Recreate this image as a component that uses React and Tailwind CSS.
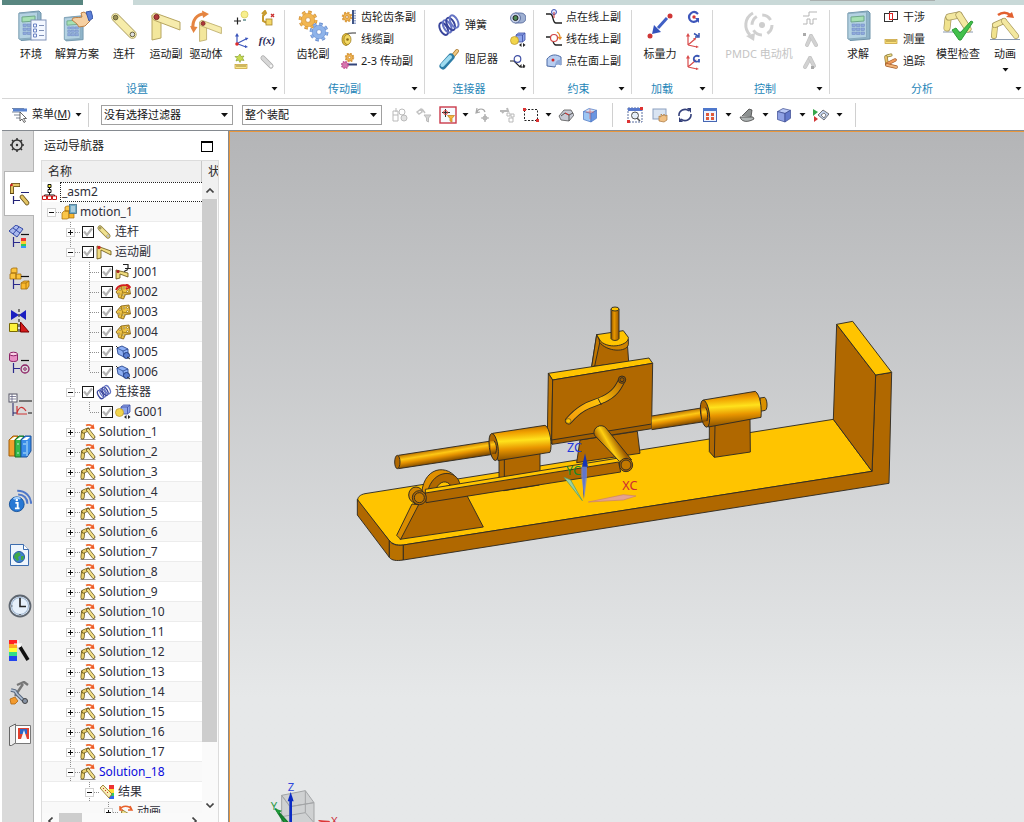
import { useState } from 'react'
import clsx from 'clsx'

const Svg = ({ s = 16, box = 16, children, className }) => (
  <svg width={s} height={s} viewBox={`0 0 ${box} ${box}`} fill="none" className={clsx('shrink-0', className)} aria-hidden="true">
    {children}
  </svg>
)

const Caret = ({ className }) => (
  <svg width="7" height="4" viewBox="0 0 7 4" className={clsx('shrink-0', className)} aria-hidden="true">
    <path d="M0.5 0h6L3.5 3.6z" fill="#111" />
  </svg>
)

// a linkage bar with round ends, shared by most of the motion icons
const Bar = ({ x1, y1, x2, y2, w = 6, fill = '#f0e290', edge = '#8c7b35' }) => (
  <g strokeLinecap="round">
    <path d={`M${x1} ${y1}L${x2} ${y2}`} stroke={edge} strokeWidth={w} />
    <path d={`M${x1} ${y1}L${x2} ${y2}`} stroke={fill} strokeWidth={w - 1.4} />
  </g>
)

const Gear = ({ cx, cy, r, fill, edge, hole = '#fff' }) => (
  <g>
    <circle cx={cx} cy={cy} r={r * 0.95} stroke={edge} strokeWidth={r * 0.45} strokeDasharray={`${r * 0.4} ${r * 0.346}`} />
    <circle cx={cx} cy={cy} r={r * 0.92} stroke={fill} strokeWidth={r * 0.36} strokeDasharray={`${r * 0.36} ${r * 0.363}`} />
    <circle cx={cx} cy={cy} r={r * 0.85} fill={fill} stroke={edge} strokeWidth="0.5" />
    <circle cx={cx} cy={cy} r={r * 0.3} fill={hole} stroke={edge} strokeWidth="0.7" />
  </g>
)

const Calculator = () => (
  <g>
    <path d="M4 3l20-2 2 2v26l-20 1.500-2-2z" fill="#8fb4c9" stroke="#6f93a9" />
    <path d="M4 3.500L22.500 2v25.500L4 29z" fill="#b4d2e2" stroke="#88aabd" />
    <path d="M7 7l13-1v5L7 12z" fill="#a6e0b2" stroke="#6fa889" />
    {[14, 18, 22].map((y) =>
      [8, 12.500, 17].map((x) => <rect key={`${x}-${y}`} x={x} y={y} width="3.500" height="2.600" fill="#8fa9dc" stroke="#6c88c0" strokeWidth="0.500" />)
    )}
  </g>
)

const Cube = ({ top = '#b9c8f4', left = '#8fa1e4', right = '#6379cb', edge = '#39498f' }) => (
  <g stroke={edge} strokeWidth="0.700" strokeLinejoin="round">
    <path d="M1.500 4.500L7 1.500l7.500 1.800L9 6.500z" fill={top} />
    <path d="M1.500 4.500L9 6.500V15l-7.500-2.500z" fill={left} />
    <path d="M9 6.500l5.500-3.200v8L9 15z" fill={right} />
  </g>
)

const SolutionIcon = () => (
  <Svg>
    <path d="M.5 15.500h15" stroke="#777" strokeWidth=".8" />
    <Bar x1={2.500} y1={13.500} x2={3} y2={8} w={4} fill="#e8cf70" edge="#5c4a12" />
    <Bar x1={3.500} y1={7.500} x2={8} y2={5.500} w={4} fill="#e8cf70" edge="#5c4a12" />
    <Bar x1={8} y1={6} x2={13.500} y2={13} w={3.600} fill="#f3e08a" edge="#5c4a12" />
    <path d="M6 1.500c2-1 4-1 6 .5" stroke="#f0703a" strokeWidth="1.800" />
    <path d="M14.500 5l-5-.5 4-4.500z" fill="#ee5a24" />
  </Svg>
)

const LinkIcon = ({ s = 16 }) => (
  <Svg s={s}>
    <Bar x1={4} y1={4} x2={12} y2={12} w={5} />
    <circle cx="4" cy="4" r="1.200" fill="#c9b75e" stroke="#665" strokeWidth=".5" />
    <circle cx="12" cy="12" r="1.200" fill="#fff" stroke="#665" strokeWidth=".5" />
  </Svg>
)

const JointBars = () => (
  <g strokeLinejoin="round">
    <path d="M2 5v25l9-2V8z" fill="#f3e79c" stroke="#b7a661" />
    <path d="M5 3C1 4.500 1 9 5 10.500L30 20v-8z" fill="#f6ecad" stroke="#b7a661" />
    <circle cx="6.500" cy="7" r="2.600" fill="#b03a3a" stroke="#7b2525" />
  </g>
)

const Spring = () => (
  <g strokeWidth="1.300">
    {[0, 1, 2, 3].map((i) => (
      <ellipse key={i} cx={4.500 + i * 2.300} cy={10.500 - i * 1.600} rx="2.400" ry="4.500" transform={`rotate(-28 ${4.500 + i * 2.300} ${10.500 - i * 1.600})`} stroke={i % 2 ? '#6574c4' : '#39459b'} />
    ))}
  </g>
)

const Contact = () => (
  <g>
    <path d="M6 3l2.500-2H15v7l-2.500 2H6z" fill="#8fa5ea" stroke="#3c4ea4" strokeWidth=".8" />
    <path d="M6 3h6.500v7M12.500 3L15 1" stroke="#3c4ea4" strokeWidth=".8" />
    <circle cx="4.500" cy="8.500" r="4" fill="#f2d54b" stroke="#b8952a" strokeWidth=".7" />
    <path d="M11.500 11v4l-2.500-2zM13 11v4l2.500-2z" fill="#222" />
  </g>
)

const Bracket = ({ driven }) => (
  <Svg>
    <path d="M1 8l5-6 8-1 1.500 9-5 .5-2 4.500-5-1.500-.5-3z" fill="#f0c544" stroke="#7d5b0c" strokeWidth=".8" />
    <path d="M6 2l1.500 6 8 1.500M7.500 8L6 14" stroke="#8a640f" strokeWidth=".7" />
    {['5,5.500', '9,4', '12.500,3.500', '12.500,7.500', '4,10', '8.500,11'].map((p) => (
      <circle key={p} cx={p.split(',')[0]} cy={p.split(',')[1]} r="1" fill="#fff6cf" stroke="#6d4f0b" strokeWidth=".5" />
    ))}
    {driven && <path d="M1 6c2-5 8-6 13-3.500M11 0l4 3-4 2" stroke="#d31f1f" strokeWidth="1.800" />}
  </Svg>
)

const BlueBlock = () => (
  <Svg>
    <path d="M2 4l5-2 6 3v6l-4 2-6-3z" fill="#8fb0f4" stroke="#27468f" strokeWidth=".9" />
    <path d="M2 4l6 3 5-2M8 7l1 6" stroke="#27468f" strokeWidth=".8" />
    <circle cx="11.500" cy="11.500" r="3" fill="#5b7fd2" stroke="#1f3a7d" />
    <path d="M1 2l2 2M12 13l3 2" stroke="#333" />
  </Svg>
)

const Axes = ({ arrow }) => (
  <Svg>
    <path d="M3 13V3M3 13l9 2M3 13l7-6" stroke="#d94b4b" strokeWidth="1.200" />
    <path d="M1 4.500L3 1l2 3.500zM11 13.500l3 1.500-3 1zM8 6.500l3.500-1-1.500 3z" fill="#d94b4b" />
    {arrow === 'line' ? (
      <path d="M9 1.500l4 2.500m1-3V5h-4" stroke="#3956b4" strokeWidth="1.500" />
    ) : (
      <path d="M14.500 2.500C11 .5 8 3 9 6c1 2 3 2 5 1M14 5v3.500" stroke="#3956b4" strokeWidth="1.800" />
    )}
  </Svg>
)

const CornerTree = ({ children }) => (
  <Svg s={24} box={24}>
    {children}
    <path d="M13 9.500h8" stroke="#111" strokeWidth="1.200" />
    <path d="M5.500 12v10M6 17.500h6" stroke="#2a2a8c" strokeWidth="1.200" />
  </Svg>
)

const Small = ({ label, children }) => (
  <button type="button" aria-label={label} className="flex h-[22px] w-[26px] items-center justify-center">
    {children}
  </button>
)

const Big = ({ label, icon, width, muted, menu }) => (
  <button type="button" className={clsx('flex flex-col items-center whitespace-nowrap pt-1', width, muted ? 'text-[#c4c4c4]' : 'text-[#1c1c1c]')}>
    <span className="flex h-8 items-center justify-center">{icon}</span>
    <span className="mt-1 h-4 leading-4">{label}</span>
    {menu && <Caret className="mt-1.5" />}
  </button>
)

const Row = ({ label, icon, tall }) => (
  <button type="button" className={clsx('flex items-center gap-1 whitespace-nowrap text-[#1c1c1c]', tall ? 'h-[34px]' : 'h-[22px]')}>
    {icon}
    <span className="leading-4">{label}</span>
  </button>
)

const Group = ({ title, children, last, className }) => (
  <section className={clsx('mt-[5px] flex h-[84px] shrink-0 flex-col', !last && 'border-r border-[#d6d6d6]', className)}>
    <div className="-mt-1 flex h-[75px] shrink-0 items-start">{children}</div>
    <div className="flex h-4 shrink-0 items-center">
      <h2 className="flex-1 text-center leading-4 text-[#1f86b8]">{title}</h2>
      <button type="button" aria-label={`${title}选项`} className="flex w-5 justify-center">
        <Caret />
      </button>
    </div>
  </section>
)

function Ribbon() {
  return (
    <div className="flex h-[94px] shrink-0 overflow-hidden border-b border-[#d6d6d6] text-[11px]">
      <Group title="设置" className="pl-2">
        <Big width="w-[42px]" label="环境" icon={
          <Svg s={32} box={32}>
            <Calculator />
            <rect x="16" y="10" width="15" height="20" fill="#f3f7ff" stroke="#8092b8" />
            <path d="M18.500 14h3v3h-3zM18.500 19h3v3h-3zM18.500 24h3v3h-3z" stroke="#6b82c2" />
            <path d="M24 15.500h5M24 20.500h5M24 25.500h5" stroke="#7f8fb5" />
          </Svg>
        } />
        <Big width="w-[50px]" label="解算方案" icon={
          <Svg s={32} box={32}>
            <g transform="translate(0 5) scale(.85)"><Calculator /></g>
            <path d="M12 8c4-1 7 0 9-1l-1-4 3-1 4 3 2 6-5 5-6 1-2-3-5-4z" fill="#f6d0a2" stroke="#bd8046" />
            <path d="M25 2l5-1 2 7-4 3z" fill="#5b7fd8" stroke="#3c59a8" />
          </Svg>
        } />
        <Big width="w-11" label="连杆" icon={
          <Svg s={30} box={32}>
            <Bar x1={7} y1={7} x2={25} y2={25} w={9} fill="#f6ecaa" edge="#a5965a" />
            <circle cx="7" cy="7" r="2.500" fill="#9c9155" stroke="#5d5735" />
            <circle cx="25" cy="25" r="2.500" fill="#ddd" stroke="#5d5735" />
          </Svg>
        } />
        <Big width="w-10" label="运动副" icon={<Svg s={32} box={32}><JointBars /></Svg>} />
        <Big width="w-10" label="驱动体" icon={
          <Svg s={32} box={32}>
            <g transform="translate(8 8) scale(.78)"><JointBars /></g>
            <path d="M3 19C2 10 7 4 14 4" stroke="#e58440" strokeWidth="3" />
            <path d="M0 16l3.500 7 4-6zM12 .5L19 4l-6 4z" fill="#e58440" />
          </Svg>
        } />
        <div className="ml-0.5 grid grid-cols-2 pt-px">
          <Small label="点"><Svg><path d="M1 11h7M4.500 7.500v7" stroke="#222" strokeWidth="1.200" /><circle cx="11.500" cy="4.500" r="3.500" fill="#f7ef8d" stroke="#d5c94d" strokeWidth=".7" /><path d="M10 9h3v2h-3z" fill="#8aa" /></Svg></Small>
          <Small label="装配"><Svg><path d="M3 4l3-3 1 2-3 3v5l4 2" stroke="#c79a2d" strokeWidth="2" /><rect x="7" y="9" width="6" height="6" fill="#f3d768" stroke="#a7842a" strokeWidth=".8" /><path d="M12 4l3 3M15 4l-3 3" stroke="#c93030" strokeWidth="1.400" /></Svg></Small>
          <Small label="坐标系"><Svg><path d="M4 12V3M5 11l8-4M5 12l8 3" stroke="#3b55bb" strokeWidth="1.200" /><path d="M2 4.500L4 1l2 3.500zM12 5.500L15.500 6 13 8.500zM12 13l3 2-3 1z" fill="#3b55bb" /><circle cx="4" cy="12" r="1.800" fill="#dc2c2c" /></Svg></Small>
          <Small label="表达式"><span className="font-['Liberation_Serif',serif] text-[11px] font-bold italic text-[#2c2a58]">f(x)</span></Small>
          <Small label="新建测量"><Svg><path d="M7 0l1 2.500L11 2 9.500 4 11 6.500 8 6 7 8.500 5.500 6 3 7l1-2.500L2 2.500l3 0z" fill="#c7dc4e" stroke="#7d9626" strokeWidth=".6" /><rect x="2" y="10.500" width="12" height="4" fill="#fbe98a" stroke="#c19a31" strokeWidth=".7" /><path d="M4 11v2m2-2v2m2-2v2m2-2v2m2-2v2" stroke="#7a5d17" strokeWidth=".7" /></Svg></Small>
          <Small label="柔性体"><Svg><Bar x1={4} y1={4} x2={12} y2={12} w={5} fill="#d7d7d7" edge="#aaa" /><circle cx="12" cy="12" r="1" fill="#fff" /></Svg></Small>
        </div>
        <div className="w-1" />
      </Group>

      <Group title="传动副" className="w-[140px]">
        <Big width="w-14" label="齿轮副" icon={
          <Svg s={32} box={32}>
            <Gear cx={11} cy={10} r={8} fill="#f2b650" edge="#c98a38" />
            <Gear cx={22} cy={22} r={8} fill="#8fb4ea" edge="#5f83c6" />
          </Svg>
        } />
        <div>
          <Row label="齿轮齿条副" icon={<Svg><Gear cx={6} cy={8} r={4.500} fill="#f2b650" edge="#bd7a26" /><path d="M12 1v14" stroke="#3f5485" strokeWidth="2" /><path d="M14 1v14" stroke="#9aaad0" strokeWidth="2" strokeDasharray="1.500 1" /></Svg>} />
          <Row label="线缆副" icon={<Svg><path d="M4 4c4-3 7-2 11-2" stroke="#777" strokeWidth="1.500" /><ellipse cx="5" cy="8.500" rx="4" ry="6" fill="#e3bf37" stroke="#93731a" strokeWidth=".8" /><ellipse cx="6.500" cy="8.500" rx="3.500" ry="5" fill="#f4da66" stroke="#93731a" strokeWidth=".7" /><circle cx="6.500" cy="8.500" r="1.300" fill="#8a6a18" /></Svg>} />
          <Row label="2-3 传动副" icon={<Svg><Gear cx={8.500} cy={4.500} r={4} fill="#f2b650" edge="#bd7a26" /><path d="M5 11.500h11" stroke="#33447a" strokeWidth="2" /><Gear cx={4} cy={12} r={3.400} fill="#e47ab8" edge="#a73c7a" /></Svg>} />
        </div>
      </Group>

      <Group title="连接器" className="w-[109px]">
        <div className="w-20 pl-3 pt-0.5">
          <Row tall label="弹簧" icon={<Svg s={24}><Spring /></Svg>} />
          <Row tall label="阻尼器" icon={
            <Svg s={24} box={24}>
              <path d="M15 10l5-6" stroke="#a9782f" strokeWidth="4" strokeLinecap="round" />
              <path d="M15 10l5-6" stroke="#f0c983" strokeWidth="2.500" strokeLinecap="round" />
              <path d="M6 19l8-9" stroke="#2d7da6" strokeWidth="7" strokeLinecap="round" />
              <path d="M5.500 18l7.500-8" stroke="#9fdcf0" strokeWidth="4" strokeLinecap="round" />
            </Svg>
          } />
        </div>
        <div className="pt-px">
          <Small label="衬套"><Svg><path d="M5 3h6a5 5 0 010 10H5z" fill="#9fb0d2" stroke="#4b5f94" strokeWidth=".8" /><circle cx="5.500" cy="8" r="5" fill="#c3cde4" stroke="#4b5f94" strokeWidth=".8" /><circle cx="5.500" cy="8" r="2.500" fill="#4d8b54" stroke="#222" /></Svg></Small>
          <Small label="3D 接触"><Svg><Contact /></Svg></Small>
          <Small label="2D 接触"><Svg><path d="M0 7h4l6 6h5" stroke="#222" strokeWidth="1.200" /><circle cx="7.500" cy="5" r="3.300" stroke="#4050a5" strokeWidth="1.200" /><path d="M11.500 10v4L9.500 12zM13 10v4l2.500-2z" fill="#222" /></Svg></Small>
        </div>
      </Group>

      <Group title="约束" className="w-[98px] pl-3">
        <div>
          <Row label="点在线上副" icon={<Svg><path d="M0 5h4c4 0 2 9 6 9h6" stroke="#222" strokeWidth="1.300" /><circle cx="8" cy="3" r="2.500" fill="#dfe6ff" stroke="#4155b4" /><path d="M8 3v6" stroke="#cf3131" /></Svg>} />
          <Row label="线在线上副" icon={<Svg><path d="M0 6h4c4 0 2 8 6 8h6" stroke="#222" strokeWidth="1.300" /><circle cx="8" cy="7" r="3.500" fill="#fff" stroke="#d04545" strokeWidth="1.200" /><path d="M11 1c2 1 3 3 3 6M12 6l2 2 1.500-2" stroke="#e6902a" strokeWidth="1.300" /></Svg>} />
          <Row label="点在面上副" icon={<Svg><path d="M1 6c4-5 9-5 14-2v8c-3-2-5-2-6 2L1 13z" fill="#b7cdf0" stroke="#4c6aa5" /><path d="M9 14c0-5 2-8 6-7v5c-3-1-5-1-6 2z" fill="#8ea9d8" /><circle cx="7" cy="7" r="1.500" fill="#d12424" /></Svg>} />
        </div>
      </Group>

      <Group title="加载" className="w-[81px]">
        <Big width="w-14" label="标量力" icon={
          <Svg s={28} box={28}>
            <path d="M21 6L12 16" stroke="#4060c5" strokeWidth="3" />
            <path d="M6 22l2-9 7 7z" fill="#3553bd" />
            <circle cx="24" cy="4" r="2.500" fill="#cf3636" /><circle cx="4" cy="24" r="2.500" fill="#cf3636" />
          </Svg>
        } />
        <div className="-ml-2 pt-px">
          <Small label="标量扭矩"><Svg><path d="M13 4C8-1 2 5 5 10c2 3 6 2 8 0" stroke="#3d56bb" strokeWidth="2.200" /><path d="M10 8h4v5z" fill="#3d56bb" /><circle cx="9" cy="7" r="1.700" fill="#d43535" /></Svg></Small>
          <Small label="矢量力"><Axes arrow="line" /></Small>
          <Small label="矢量扭矩"><Axes /></Small>
        </div>
      </Group>

      <Group title="控制" className="w-[117px] pl-2">
        <Big muted width="w-[76px]" label="PMDC 电动机" icon={
          <Svg s={32} box={32}>
            <path d="M10 3C1 8 1 19 7 25" stroke="#d0d0d0" strokeWidth="3" /><path d="M3 26l9-3-1 8z" fill="#d0d0d0" />
            <circle cx="19" cy="15" r="10" stroke="#d0d0d0" strokeWidth="3" strokeDasharray="10 5.700" />
            <circle cx="19" cy="15" r="3" fill="#cecece" />
          </Svg>
        } />
        <div className="pt-px">
          <Small label="信号图"><Svg><path d="M1 6h6V2h8M1 14h4V9h3v5h3V9h4" stroke="#b5b5b5" /></Svg></Small>
          <Small label="传感器"><Svg><Bar x1={5} y1={13} x2={9} y2={4} w={4} fill="#d2d2d2" edge="#c4c4c4" /><Bar x1={9} y1={4} x2={14} y2={13} w={4} fill="#d2d2d2" edge="#c4c4c4" /><path d="M1 1h3v3H1z" fill="#aaa" /></Svg></Small>
          <Small label="控制输入"><Svg><Bar x1={3} y1={13} x2={8} y2={4} w={4} fill="#d2d2d2" edge="#c4c4c4" /><Bar x1={8} y1={4} x2={12} y2={12} w={4} fill="#d2d2d2" edge="#c4c4c4" /><path d="M9 12h3v3H9z" fill="#aaa" /></Svg></Small>
        </div>
      </Group>

      <Group last title="分析" className="w-[198px] pl-1.5">
        <Big width="w-11" label="求解" icon={<Svg s={32} box={32}><g transform="translate(2 0)"><Calculator /></g></Svg>} />
        <div className="ml-[3px] w-[50px]">
          <Row label="干涉" icon={<Svg><rect x="1.500" y="4.500" width="8" height="8" stroke="#333" /><rect x="6.500" y="2.500" width="8" height="8" stroke="#333" /><rect x="6.500" y="4.500" width="3" height="6" stroke="#d22" /></Svg>} />
          <Row label="测量" icon={<Svg><rect x="2" y="8.500" width="12" height="4" fill="#fbe07a" stroke="#c19a31" strokeWidth=".7" /><path d="M4 9v2m2-2v2m2-2v2m2-2v2m2-2v2" stroke="#7a5d17" strokeWidth=".7" /></Svg>} />
          <Row label="追踪" icon={<Svg><Bar x1={4} y1={3} x2={8} y2={2} w={3} /><Bar x1={3} y1={4} x2={4} y2={11} w={3.500} fill="#ecc169" /><Bar x1={4} y1={11} x2={12} y2={7} w={3.500} fill="#ee9a5c" edge="#a65b28" /><Bar x1={4} y1={12} x2={13} y2={14} w={3.500} fill="#f2b478" edge="#a65b28" /></Svg>} />
        </div>
        <Big width="w-[50px]" label="模型检查" icon={
          <Svg s={32} box={32}>
            <path d="M1 22h30" stroke="#8a9ab0" />
            <Bar x1={5} y1={18} x2={6} y2={9} w={7} fill="#f0e28e" edge="#a5965a" /><Bar x1={7} y1={7} x2={17} y2={5} w={7} fill="#f3e8a0" edge="#a5965a" /><Bar x1={17} y1={5} x2={26} y2={19} w={7} fill="#f3e8a0" edge="#a5965a" />
            <path d="M10 20l4-2 4 5L29 11l2 1-12 18h-2z" fill="#42c04b" stroke="#2c9c37" />
          </Svg>
        } />
        <Big menu width="w-11" label="动画" icon={
          <Svg s={32} box={32}>
            <path d="M1 29.500h30" stroke="#8a9ab0" />
            <Bar x1={5} y1={26} x2={6} y2={16} w={6} fill="#f0e28e" edge="#a5965a" /><Bar x1={6} y1={15} x2={15} y2={11} w={6} fill="#f3e8a0" edge="#a5965a" /><Bar x1={15} y1={11} x2={27} y2={26} w={6} fill="#f3e8a0" edge="#a5965a" />
            <path d="M9 5c4-3 9-3 12 0" stroke="#e2602f" strokeWidth="2.600" /><path d="M25 8l-8-1 6-5z" fill="#e2602f" />
          </Svg>
        } />
      </Group>
    </div>
  )
}

const Combo = ({ label, options, className }) => (
  <span className={clsx('relative flex items-center', className)}>
    <select aria-label={label} className="h-5 w-full appearance-none border border-[#a0a0a0] bg-white px-[2px] text-[11px] leading-4 text-[#111]">
      {options.map((option) => <option key={option}>{option}</option>)}
    </select>
    <svg width="7" height="4" viewBox="0 0 7 4" className="pointer-events-none absolute right-[5px]"><path d="M0 0h7L3.500 4z" fill="#111" /></svg>
  </span>
)

const Tool = ({ label, children, menu }) => (
  <>
    <button type="button" aria-label={label} className="flex h-6 w-6 shrink-0 items-center justify-center">{children}</button>
    {menu && <button type="button" aria-label={`${label}选项`} className="flex h-6 w-[11px] shrink-0 items-center justify-center"><Caret /></button>}
  </>
)

const Divider = () => <span className="mx-2.5 h-6 w-px shrink-0 bg-[#d0d0d0]" />

function Toolbar() {
  return (
    <div className="flex h-8 shrink-0 items-center overflow-hidden border-b border-[#858a90] pl-2.5">
      <button type="button" className="flex w-[73px] items-center gap-1 whitespace-nowrap text-[11px] text-[#1c1c1c]">
        <Svg>
          <path d="M0 1.500h12M0 5h8M2 8h7M4 11h5" stroke="#7d8797" /><rect x="1" y="1.500" width="14" height="3" fill="#5b84cf" />
          <path d="M8 5v9l2-2 2 3.500 1.500-1-2-3h3z" fill="#fff" stroke="#444" strokeWidth=".8" />
        </Svg>
        <span>菜单(<u>M</u>)</span>
        <Caret />
      </button>
      <span className="ml-[3px] mr-3 h-6 w-px shrink-0 bg-[#d0d0d0]" />
      <Combo label="选择过滤器" options={['没有选择过滤器']} className="w-[132px]" />
      <Combo label="选择范围" options={['整个装配', '仅在工作部件内']} className="ml-[9px] mr-1.5 w-[140px]" />
      <Tool label="选择组件"><Svg><path d="M1 4h5v10H1zM1 8h5M4 1v4" stroke="#b9b9b9" /><circle cx="10" cy="5" r="3" stroke="#bbb" /><circle cx="12" cy="11" r="3" fill="#e2e2e2" stroke="#bbb" /></Svg></Tool>
      <Tool label="过滤"><Svg><path d="M1 5l4-3 1 3-3 2zM6 2l3 4" stroke="#c2c2c2" strokeWidth="1.500" /><path d="M8 8h7l-2.500 3v4l-2-1v-3z" fill="#d4d4d4" stroke="#bbb" /></Svg></Tool>
      <Tool label="选择意图" menu><Svg s={18} box={18}><rect x="1" y="1" width="16" height="16" fill="#f6faff" stroke="#cb3b4b" strokeWidth="1.400" /><path d="M6.500 3v8M3 6.500h8" stroke="#333" /><circle cx="6.500" cy="6.500" r="2" stroke="#d44" /><path d="M8.500 9.500h7l-2.500 3V16l-2-1v-2.500z" fill="#f5b53c" stroke="#c27d16" strokeWidth=".7" /></Svg></Tool>
      <Tool label="旋转点"><Svg><path d="M2 1L1 6l4-1M2 5c1-4 7-4 8 0M10 7v8M6 11h8" stroke="#a8a8a8" strokeWidth="1.200" /><circle cx="10" cy="11" r="2" stroke="#aaa" /></Svg></Tool>
      <Tool label="捕捉"><Svg><path d="M1 4h8l-1-3M3 6l2-2" stroke="#b9b9b9" strokeWidth="2" /><path d="M8 6h3v3H8zM12 7h3v3h-3zM10 11h4v4h-4z" stroke="#b9b9b9" /></Svg></Tool>
      <Tool label="矩形选择" menu><Svg><rect x="1.500" y="2.500" width="13" height="11" stroke="#222" strokeDasharray="2 1.500" /><path d="M0 1h3v3H0zM13 12h3v3h-3z" fill="#d33" /></Svg></Tool>
      <Tool label="透视"><Svg><path d="M1 9l5-6h7l3 5-5 6-8-1z" fill="#c6c9d4" stroke="#555" strokeWidth=".8" /><path d="M3 9l4-3 4 2v6M11 8l4-2" stroke="#555" /><path d="M7 6l4 2" stroke="#d33" /></Svg></Tool>
      <Tool label="着色"><Svg><Cube top="#cfe4fb" left="#9cc6f4" right="#6a96e2" edge="#4b74c2" /><path d="M8 2v10M4 5h8" stroke="#d66" strokeWidth=".7" /></Svg></Tool>
      <Divider />
      <div className="flex items-center gap-px">
        <Tool label="适合窗口"><Svg><rect x="1" y="1" width="14" height="14" stroke="#5a6fa0" strokeDasharray="2 1" /><path d="M1 1h14v3H1z" fill="#5878cc" /><circle cx="8" cy="8.500" r="3.500" fill="#e5eef8" stroke="#555" /><path d="M10 11l3 3" stroke="#555" strokeWidth="1.500" /><path d="M0 13h3v3H0zM13 0h3v3h-3z" fill="#d33" /></Svg></Tool>
        <Tool label="平移"><Svg><rect x="1" y="2" width="13" height="10" fill="#d9e4f2" stroke="#8ba0bf" /><path d="M7 14l0-5 2 1V7l2 2 1-2 1 2 2-1v5l-3 2z" fill="#f0c084" stroke="#a8763c" strokeWidth=".7" /></Svg></Tool>
        <Tool label="旋转"><Svg><path d="M2 9a6 6 0 0110-5M14 7A6 6 0 014 12" stroke="#34407a" strokeWidth="1.600" /><path d="M10 1h4v5zM6 15H2v-5z" fill="#34407a" /></Svg></Tool>
        <Tool label="窗口布局" menu><Svg><rect x="1.500" y="1.500" width="13" height="13" fill="#eef4ff" stroke="#4667b3" /><path d="M1 1h14v3H1z" fill="#4f78cc" /><path d="M4 6h3v3H4zM9 6h3v3H9zM4 10h3v3H4zM9 10h3v3H9z" fill="#e05a3a" /></Svg></Tool>
        <Tool label="剖切" menu><Svg><path d="M3 9l7-7 3 1-1 7" fill="#8d9191" stroke="#444" strokeWidth=".8" /><path d="M1 10c2 6 9 5 14 2l-1-2H6z" fill="#b0b5b5" stroke="#444" strokeWidth=".8" /></Svg></Tool>
        <Tool label="显示样式" menu><Svg><Cube /></Svg></Tool>
        <Tool label="方向" menu><Svg><path d="M0 2l5 3-5 4z" fill="#36a64a" /><path d="M1 9l4 3-4 3z" fill="#d23737" /><path d="M5 8l5-5 6 4-5 6z" fill="#c2d2ec" stroke="#555" strokeWidth=".8" /><path d="M8 8l3-2 2 2-2 3z" fill="#fff" stroke="#555" strokeWidth=".7" /></Svg></Tool>
      </div>
      <Divider />
    </div>
  )
}

const sideTabs = [
  { id: 'settings', label: '设置', h: 'h-10', icon: <Svg s={16} className="-mt-3 mr-1.5"><circle cx="8" cy="8" r="5" stroke="#333" strokeWidth="1.500" /><circle cx="8" cy="8" r="1.200" fill="#333" /><path d="M8 1v2m0 10v2M1 8h2m10 0h2M3 3l1.500 1.500m7 7L13 13M13 3l-1.500 1.500m-7 7L3 13" stroke="#333" strokeWidth="1.500" /></Svg> },
  { id: 'motion', label: '运动导航器', h: 'h-[45px]', icon: (
    <Svg s={24} box={24}><path d="M4 3v9M3 3h9" stroke="#5d4614" strokeWidth="4" /><path d="M4 3v8M3 3h8.500" stroke="#e2c465" strokeWidth="2.400" /><circle cx="3.500" cy="3" r="1.300" fill="#c22" /><path d="M13 10.500h8M5.500 14v8M6 18.500h6" stroke="#222277" strokeWidth="1.200" /><Bar x1={14} y1={15} x2={19} y2={21} w={4.500} fill="#e2c465" edge="#5d4614" /></Svg>
  ) },
  { id: 'result', label: '后处理', h: 'h-[42px]', icon: <CornerTree><path d="M1 6l7-6 7 4-6 8zM5 3l7 5M5 9l6-7" fill="#a9b9ee" stroke="#3347a5" /><path d="M13 13h5v3h-5z" fill="#e33" /><path d="M13 16h5v3h-5z" fill="#fc3" /><path d="M13 19h5v2h-5z" fill="#3c5" /><path d="M13 21h5v2h-5z" fill="#39f" /></CornerTree> },
  { id: 'assembly', label: '装配导航器', h: 'h-[42px]', icon: <CornerTree><g stroke="#a36c0a" strokeWidth=".8"><path d="M3 2l2-1h4v5H3zM2 7l2-1h4v6H2zM8 7h5v5H8z" fill="#fbc33d" /><path d="M13 16l3-2h5v5l-2 3h-6z" fill="#fbb92e" /><path d="M13 16h5v6M18 16l3-2" /></g></CornerTree> },
  { id: 'constraint', label: '约束导航器', h: 'h-[42px]', icon: <Svg s={24} box={24}><path d="M3 1l8 5-8 5zM18 1l-7 5 7 5z" fill="#1b1fc0" /><path d="M11 0v23" stroke="#111" strokeDasharray="3 2" /><path d="M1.500 14.500h8v8h-8z" fill="#fdf23c" stroke="#7a6a00" /><path d="M12.500 13v10H21z" fill="#d51a1a" stroke="#700" /></Svg> },
  { id: 'part', label: '部件导航器', h: 'h-[42px]', icon: <CornerTree><path d="M1.500 3v6c0 2 8 2 8 0V3" fill="#e78fc3" stroke="#8d2266" /><ellipse cx="5.500" cy="3" rx="4" ry="1.800" fill="#f8cfe4" stroke="#8d2266" /><circle cx="17" cy="18" r="4" stroke="#8d2266" strokeWidth="1.300" /><circle cx="17" cy="18" r="1.300" stroke="#8d2266" /></CornerTree> },
  { id: 'xy', label: 'XY 函数导航器', h: 'h-[42px]', icon: <Svg s={24} box={24}><rect x="1" y="1" width="8" height="8" fill="#fff" stroke="#556" /><path d="M2 3.500h6M2 6h6M4 1v8" stroke="#557" strokeWidth=".7" /><path d="M11 8h13M20 20h4" stroke="#111" /><path d="M5 10v13M5 20h4" stroke="#226" /><path d="M9 13v8h10M9 20c2-6 5-8 9-2" stroke="#c33" strokeWidth="1.200" /></Svg> },
  { id: 'reuse', label: '重用库', h: 'h-[42px]', icon: <Svg s={24} box={24}><path d="M1 5l4-4h5L7 5v16H1z" fill="#f0a02c" stroke="#a15d0a" /><path d="M7 5l4-4h5l-3 4v17H7z" fill="#35b94c" stroke="#16712a" /><path d="M13 5l4-4h6v15l-4 6h-6z" fill="#398ce8" stroke="#1b519a" /><path d="M2 5L6 2h3L6 5zM8 5l4-3h3l-3 3zM14 5l4-3h4l-3 3z" fill="#fff" /><path d="M9 9h2M9 18h2M15 9h3M15 18h3M19 6v15" stroke="#dff" strokeWidth=".8" /></Svg> },
  { id: 'hd3d', label: 'HD3D 工具', h: 'mt-1.5 h-[54px]', icon: <Svg s={24} box={26}><path d="M11 6c6 0 10 4 10 10M10 2c9 0 15 6 15 14" stroke="#4f78c9" strokeWidth="2.200" /><circle cx="9.500" cy="16.500" r="8" fill="#2878d4" stroke="#135099" /><path d="M6 11c2-2 6-2 7 0" stroke="#a8d2ff" strokeWidth="2" /><path d="M8 15h2.500v6M7.500 21h5" stroke="#fff" strokeWidth="2" /><circle cx="9.500" cy="12" r="1.400" fill="#fff" /></Svg> },
  { id: 'web', label: 'Web 浏览器', h: 'h-[54px]', icon: <Svg s={24} box={24}><path d="M2.500 1.500h13l5 5v16h-18z" fill="#eef5fd" stroke="#3c6cae" /><path d="M15.500 1.500v5h5" fill="#fff" stroke="#3c6cae" /><circle cx="11" cy="14" r="5.500" fill="#3f82d2" stroke="#245a9b" /><path d="M7 11l4-2 2 3-3 2 1 3-2 1-3-4zM13 13h3l-1 4h-2z" fill="#3fa845" /></Svg> },
  { id: 'history', label: '历史记录', h: 'h-12', icon: <Svg s={24} box={24}><circle cx="12" cy="12" r="10.500" fill="#e6f0fb" stroke="#5e6670" strokeWidth="1.800" /><circle cx="12" cy="12" r="8.500" stroke="#98b0cc" /><path d="M12 4v8.500h6" stroke="#222" strokeWidth="1.600" /><path d="M12 20v1M3.500 12h1" stroke="#333" /></Svg> },
  { id: 'role', label: '角色', h: 'h-[42px]', icon: <Svg s={24} box={24}><path d="M1 1h8v4H1z" fill="#f22" /><path d="M1 5h8v4H1z" fill="#fa2" /><path d="M1 9h8v4H1z" fill="#ff3" /><path d="M1 13h8v4H1z" fill="#3d8" /><path d="M1 17h8v5H1z" fill="#24e" /><path d="M12 8l8 13" stroke="#111" strokeWidth="3.500" /><path d="M10 5l2 3" stroke="#fff" strokeWidth="3" /><path d="M10 1v7M6 5h8" stroke="#fff" /></Svg> },
  { id: 'tools', label: '工具', h: 'h-[42px]', icon: <Svg s={24} box={24}><path d="M9 4l7-3 4 3M15 3l-8 12" stroke="#777" strokeWidth="2.400" /><path d="M3 9l4 1 2 3 8 8" stroke="#55657c" strokeWidth="3.600" /><path d="M3 9l4 1 2 3 7 7" stroke="#b6c4d6" strokeWidth="1.500" /><path d="M2 18l5-2 3 4-3 3H3z" fill="#f29a2e" stroke="#b1640e" strokeWidth=".8" /><circle cx="17" cy="20" r="2.500" fill="#8793a5" stroke="#444" /></Svg> },
  { id: 'scene', label: '系统场景', h: 'h-[42px]', icon: <Svg s={24} box={24}><path d="M1.500 4l6-3v19l-4 2.500h-2z" fill="#eee" stroke="#666" /><path d="M7.500 2.500h15v18h-15z" fill="#fff" stroke="#777" /><path d="M10 5h11v11H10z" fill="#e0402d" /><path d="M12 6h7v5h-7z" fill="#2e66c6" /><path d="M13 16l3-9 3 9z" fill="#f6f6f6" /></Svg> },
]

// guide column: one 19px cell per tree level
const Guide = ({ type }) => {
  const dots = { stroke: '#8f8f8f', strokeDasharray: '1 1' }
  const box = type === 'plus' || type === 'minus' || type === 'first'
  return (
    <svg width="19" height="20" viewBox="0 0 19 20" fill="none" className="shrink-0" shapeRendering="crispEdges">
      {(type === 'line' || type === 'tee' || type === 'plus' || type === 'minus') && <path d="M9.500 0v20" {...dots} />}
      {type === 'elbow' && <path d="M9.500 0v10" {...dots} />}
      {type && type !== 'line' && <path d="M10 10.500h9" {...dots} />}
      {box && <rect x="5.500" y="6.500" width="8" height="8" fill="#fff" stroke="#d3d3d3" />}
      {box && <path d="M7 10.500h5" stroke="#111" />}
      {type === 'plus' && <path d="M9.500 8v5" stroke="#111" />}
    </svg>
  )
}

const MotionIcon = () => (
  <Svg><g stroke="#a36c0a" strokeWidth=".7"><path d="M1 9l2-2h5v7l-2 1H1zM4 3l2-1h4v5H4z" fill="#fbc64a" /><path d="M8 8h5v6H8z" fill="#f7b52e" /></g><rect x="8.500" y=".5" width="7" height="9" fill="#6fa9c4" stroke="#42708c" strokeWidth=".8" /><path d="M10 3h4M10 5h4M10 7h4" stroke="#fff" strokeWidth=".8" /></Svg>
)
const JointIcon = () => (
  <Svg><path d="M1 2v13l4-1V6l10 5V7z" fill="#f0dc80" stroke="#65520f" strokeWidth=".8" /><circle cx="3" cy="3.500" r="1.700" fill="#c22" /></Svg>
)
const J1Icon = () => (
  <Svg><path d="M1 6v9l4-1v-4l8 3V9z" fill="#f0dc80" stroke="#65520f" strokeWidth=".8" /><circle cx="3" cy="7.500" r="1.600" fill="#a22" /><path d="M8 .5h5v4M10 4.500h6M9 7.500l4-2" stroke="#222" strokeWidth="1.200" /></Svg>
)
const ResultIcon = () => (
  <Svg><path d="M10 1h5v4h-5z" fill="#e33" /><path d="M10 5h5v4h-5z" fill="#fd3" /><path d="M10 9h5v3h-5z" fill="#3c6" /><path d="M10 12h5v3h-5z" fill="#36e" /><path d="M1 4l3-3 9 9-3 4z" fill="#f8eeb2" stroke="#8a6a20" strokeWidth=".8" /><path d="M4 4l1 1m1 1l1 1m1 1l1 1" stroke="#c33" /></Svg>
)
const AnimIcon = () => (
  <Svg><Bar x1={4} y1={13} x2={5} y2={8} w={3.500} /><Bar x1={5} y1={8} x2={12} y2={12} w={3.500} /><path d="M2 6c2-5 9-5 12 0M12 2l2 4h-4M2 2v4h3" stroke="#e8602a" strokeWidth="1.500" /></Svg>
)

const rows = [
  { name: 'motion_1', guides: ['first'], icon: <MotionIcon /> },
  { name: '连杆', guides: ['', 'plus'], check: true, icon: <LinkIcon /> },
  { name: '运动副', guides: ['', 'minus'], check: true, icon: <JointIcon /> },
  { name: 'J001', guides: ['', 'line', 'tee'], check: true, icon: <J1Icon /> },
  { name: 'J002', guides: ['', 'line', 'tee'], check: true, icon: <Bracket driven /> },
  { name: 'J003', guides: ['', 'line', 'tee'], check: true, icon: <Bracket /> },
  { name: 'J004', guides: ['', 'line', 'tee'], check: true, icon: <Bracket /> },
  { name: 'J005', guides: ['', 'line', 'tee'], check: true, icon: <BlueBlock /> },
  { name: 'J006', guides: ['', 'line', 'elbow'], check: true, icon: <BlueBlock /> },
  { name: '连接器', guides: ['', 'minus'], check: true, icon: <Svg><Spring /></Svg> },
  { name: 'G001', guides: ['', 'line', 'elbow'], check: true, icon: <Svg><Contact /></Svg> },
  ...Array.from({ length: 17 }, (_, i) => ({ name: `Solution_${i + 1}`, guides: ['', 'plus'], icon: <SolutionIcon /> })),
  { name: 'Solution_18', guides: ['', 'minus'], icon: <SolutionIcon />, active: true },
  { name: '结果', guides: ['', '', 'minus'], icon: <ResultIcon /> },
  { name: '动画', guides: ['', '', '', 'plus'], icon: <AnimIcon /> },
]

function TreeRow({ row, index }) {
  const Tag = row.check ? 'label' : 'div'
  return (
    <li className={clsx('h-5 border-b border-[#ececec]', index % 2 === 0 ? 'bg-[#f9f9f9]' : 'bg-white')}>
      <Tag className="flex h-5 items-center whitespace-nowrap">
        {row.guides.map((type, i) => <Guide key={i} type={type} />)}
        {row.check && (
          <span className="relative mx-0.5 h-3 w-3 shrink-0">
            <input type="checkbox" defaultChecked className="peer block h-3 w-3 appearance-none border border-[#1a1a1a] bg-white" />
            <svg viewBox="0 0 12 12" className="pointer-events-none absolute inset-0 hidden h-3 w-3 peer-checked:block" fill="none">
              <path d="M2 5.500l3 3.500L10 2.500" stroke="#b3b3b3" strokeWidth="2.200" />
            </svg>
          </span>
        )}
        {row.icon}
        <span className={clsx('ml-[3px] leading-4', row.active ? 'text-[#0b0bdc]' : 'text-[#2e2e38]')}>{row.name}</span>
      </Tag>
    </li>
  )
}

function Navigator() {
  return (
    <aside className="flex w-[195px] shrink-0 flex-col border-r border-[#858a90] bg-white pl-[7px] pr-[9px] text-xs">
      <header className="flex h-[29px] shrink-0 items-center justify-between pl-[3px] pr-1.5">
        <h1 className="text-[#1c1c1c]">运动导航器</h1>
        <button type="button" aria-label="最大化" className="mt-0.5 h-[11px] w-3 border border-t-2 border-black" />
      </header>
      <div className="flex min-h-0 flex-1 flex-col border-x border-t border-[#dcdcdc]">
        <div className="flex h-[21px] shrink-0 items-center overflow-hidden bg-[#f0f0f0] text-[#2a2a2a]">
          <span className="flex h-full flex-1 items-center border-r border-[#c8c8c8] pl-1.5">名称</span>
          <span className="w-4 overflow-hidden whitespace-nowrap pl-1.5">状态</span>
        </div>
        <div className="flex min-h-0 flex-1">
          <ul className="min-w-0 flex-1 overflow-hidden">
            <li className="flex h-5 items-center gap-0.5">
              <Svg>
                <path d="M7.500 3v3M7.500 9v2M2.500 13v-2h10v2" stroke="#111" />
                <path d="M6 .5h3v3H6z" fill="#fdf23c" stroke="#111" /><path d="M6 5.500h3v3H6z" fill="#fff" stroke="#111" />
                <path d="M.5 12h4v3.500h-4zM5.500 12h4v3.500h-4zM10.500 12h4v3.500h-4z" fill="#fff" stroke="#d01818" />
              </Svg>
              <span className="flex h-5 flex-1 items-center border border-r-0 border-dotted border-[#222] pl-px text-[#2e2e38]">_asm2</span>
            </li>
            {rows.map((row, index) => <TreeRow key={row.name} row={row} index={index} />)}
          </ul>
          <div className="flex w-4 shrink-0 flex-col bg-[#fafafa]">
            <button type="button" aria-label="向上" className="flex h-[17px] shrink-0 items-center justify-center bg-[#f0f0f0]">
              <svg width="8" height="5" viewBox="0 0 8 5" fill="none"><path d="M.5 4.500L4 1l3.500 3.500" stroke="#444" strokeWidth="1.600" /></svg>
            </button>
            <div className="mr-px h-[86%] bg-[#cdcdcd]" />
            <button type="button" aria-label="向下" className="mt-auto flex h-4 items-center justify-center">
              <svg width="8" height="5" viewBox="0 0 8 5" fill="none"><path d="M.5 .5L4 4 7.500 .5" stroke="#444" strokeWidth="1.600" /></svg>
            </button>
          </div>
        </div>
        <div className="flex h-[9px] shrink-0 items-start overflow-hidden bg-[#fafafa] pr-4">
          <button type="button" aria-label="向左" className="flex h-4 w-[17px] items-center justify-center">
            <svg width="5" height="8" viewBox="0 0 5 8" fill="none"><path d="M4.500 .5L1 4l3.500 3.500" stroke="#444" strokeWidth="1.600" /></svg>
          </button>
          <div className="h-4 w-[23px] bg-[#cdcdcd]" />
          <button type="button" aria-label="向右" className="ml-auto flex h-4 w-4 items-center justify-center">
            <svg width="5" height="8" viewBox="0 0 5 8" fill="none"><path d="M.5 .5L4 4 .5 7.500" stroke="#444" strokeWidth="1.600" /></svg>
          </button>
        </div>
      </div>
    </aside>
  )
}

function Model() {
  return (
    <svg viewBox="-360 -504 2382 2070" preserveAspectRatio="xMinYMin meet" className="block h-full w-full" role="img" aria-label="机构模型">
      <defs>
        <linearGradient id="rod" gradientUnits="objectBoundingBox" x1=".45" y1="0" x2=".55" y2="1">
          <stop offset="0" stopColor="#b86a00" /><stop offset=".2" stopColor="#f0a000" /><stop offset=".42" stopColor="#ffe21c" /><stop offset=".65" stopColor="#e89500" /><stop offset="1" stopColor="#7d4800" />
        </linearGradient>
        <linearGradient id="thin" gradientUnits="userSpaceOnUse" x1="285" y1="442" x2="292" y2="484">
          <stop offset="0" stopColor="#b86c00" /><stop offset=".35" stopColor="#ffc814" /><stop offset=".6" stopColor="#e59200" /><stop offset="1" stopColor="#7d4800" />
        </linearGradient>
        <linearGradient id="thin2" gradientUnits="userSpaceOnUse" x1="985" y1="334" x2="992" y2="376">
          <stop offset="0" stopColor="#b86c00" /><stop offset=".35" stopColor="#ffc814" /><stop offset=".6" stopColor="#e59200" /><stop offset="1" stopColor="#7d4800" />
        </linearGradient>
        <linearGradient id="pin" x1="0" x2="1">
          <stop offset="0" stopColor="#8a5000" /><stop offset=".4" stopColor="#e89800" /><stop offset="1" stopColor="#9a5900" />
        </linearGradient>
        <linearGradient id="crank" gradientUnits="userSpaceOnUse" x1="762" y1="450" x2="804" y2="426">
          <stop offset="0" stopColor="#b06a00" /><stop offset=".45" stopColor="#ffd011" /><stop offset="1" stopColor="#a05c00" />
        </linearGradient>
        <linearGradient id="slot" gradientUnits="userSpaceOnUse" x1="655" y1="362" x2="815" y2="240">
          <stop offset="0" stopColor="#f39c0c" /><stop offset=".55" stopColor="#ffc20a" /><stop offset="1" stopColor="#b86c00" />
        </linearGradient>
      </defs>
      <g stroke="#2e2a22" strokeWidth="2.800" strokeLinejoin="round">
        {/* base plate and end wall */}
        <path d="M45 581L1450 358 1566 514 160 735C140 738 125 730 118 722L24 606C20 592 30 584 45 581z" fill="#ffc400" />
        <path d="M22 598V645L118 772V722z" fill="#b06800" />
        <path d="M118 722C125 733 140 738 160 735V780C140 783 125 782 118 772z" fill="#b97100" />
        <path d="M160 735L1566 514 1577 225 1625 217 1617 550 160 780z" fill="#b06800" />
        <path d="M1460 73L1450 358 1566 514 1577 225z" fill="#b06800" />
        <path d="M1460 73L1508 64 1625 217 1577 225z" fill="#ffc400" />

        {/* rear tower */}
        <path d="M740 104L725 200 836 185 832 130z" fill="#b06800" />
        <path d="M740 104L725 200 734 198 750 124z" fill="#c07600" />
        <path d="M748 112V126C770 156 830 158 835 134V118z" fill="#cf8400" />
        <path d="M740 104L820 92 835 112C838 135 780 150 752 124z" fill="#ffc400" />
        <path d="M783 27V116C787 123 803 123 807 116V27z" fill="url(#pin)" />
        <ellipse cx="795" cy="27" rx="12" ry="6" fill="#ffc400" />
        <path d="M690 420L862 394 870 460 680 488z" fill="#b06800" />
        <path d="M604 415L905 368V386L606 433z" fill="#a15e00" />

        {/* cam plate */}
        <path d="M595 220L897 174 908 190 608 240z" fill="#ffc400" />
        <path d="M595 220L608 240 605 432 592 412z" fill="#bd7300" />
        <path d="M608 240L908 190 905 372 605 420z" fill="#b06800" />
        <path d="M656 362C700 310 735 312 760 298 795 282 805 262 816 240" stroke="#2e2a22" strokeWidth="22" strokeLinecap="round" fill="none" />
        <path d="M656 362C700 310 735 312 760 298 795 282 805 262 816 240" stroke="url(#slot)" strokeWidth="17" strokeLinecap="round" fill="none" />
        <path d="M744 295l10 20" />
        <circle cx="816" cy="239" r="11" fill="#9d5b00" /><circle cx="816" cy="239" r="6" fill="none" />
        <ellipse cx="655" cy="363" rx="8" ry="7" fill="#ffc400" strokeWidth="1.500" />

        {/* left slider */}
        <path d="M447 475L570 456V520L463 540 447 534z" fill="#b06800" /><path d="M463 478V540" />
        <path d="M460 571L568 554" strokeWidth="5" />
        <path d="M145 466L430 422 436 462 145 506z" fill="url(#thin)" stroke="none" />
        <path d="M145 466L430 422M145 506L436 462" />
        <ellipse cx="142" cy="486" rx="8" ry="20" fill="#b06800" />
        <path d="M428 400L585 376C600 380 608 440 600 457L444 482z" fill="url(#rod)" />
        <ellipse cx="431" cy="441" rx="13" ry="41" fill="#b06800" transform="rotate(-8 431 441)" />
        <path d="M420 424L432 422C440 432 442 450 436 461L424 463z" fill="url(#thin)" stroke="none" />
        <path d="M432 422C440 432 442 450 436 461" fill="none" />

        {/* right slider */}
        <path d="M905 348L1066 322 1070 364 905 389z" fill="url(#thin2)" stroke="none" />
        <path d="M905 348L1066 322M1070 364L905 389" />
        <path d="M1078 374L1200 356 1201 456 1093 472 1078 455z" fill="#b06800" /><path d="M1095 376L1093 472" />
        <path d="M1230 294L1244 292C1252 298 1254 326 1246 331L1230 334z" fill="#d99000" />
        <path d="M1060 300L1216 274C1230 284 1236 320 1233 352L1075 381z" fill="url(#rod)" />
        <ellipse cx="1065" cy="341" rx="13" ry="41" fill="#b06800" transform="rotate(-8 1065 341)" />
        <path d="M1054 324L1067 322C1074 335 1074 350 1071 363L1058 366z" fill="url(#thin2)" stroke="none" />
        <path d="M1067 322C1074 335 1074 350 1071 363" fill="none" />

        {/* front bearing */}
        <path d="M215 580C222 490 310 490 330 556L300 575z" fill="#e09000" />
        <path d="M232 580C245 505 325 505 330 556z" fill="#b06800" />
        <path d="M258 567C268 542 292 540 301 556z" fill="#ffc400" />
        <path d="M195 606L350 585 400 681 150 718z" fill="#b06800" />
        <path d="M186 612L206 614 152 718 140 706z" fill="#d98c00" />
        <ellipse cx="198" cy="585" rx="22" ry="24" fill="#d08400" />

        {/* connecting link */}
        <path d="M226 568L812 473 826 477 806 490 226 584z" fill="#ffc400" />
        <path d="M226 579L806 486 812 516 228 608z" fill="#b06800" />
        <circle cx="208" cy="593" r="21" fill="#b06800" /><circle cx="208" cy="593" r="15" fill="#c27800" />
        <path d="M733 405C725 382 755 368 768 384L845 480 808 484z" fill="url(#crank)" />
        <circle cx="828" cy="495" r="20" fill="#b06800" /><circle cx="828" cy="495" r="15" fill="#c27800" />
      </g>

      {/* work coordinate system */}
      <path d="M700 598L698 500h12z" fill="#1a35b8" opacity=".9" /><path d="M694 530V500h17v30L703 595z" fill="#6e86d8" opacity=".8" /><path d="M705 460L714 500h-18z" fill="#1535b8" />
      <path d="M697 602L642 532 662 540z" fill="#9ad0a0" stroke="#4f9a66" strokeWidth="2" />
      <path d="M715 606L820 584 858 588 820 600z" fill="#e5a38f" stroke="#c77e70" strokeWidth="2" />
      <g fontSize="38" fontFamily="Noto Sans, sans-serif">
        <text x="651" y="457" fill="#2238dc">ZC</text>
        <text x="648" y="524" fill="#148a2b">YC</text>
        <text x="817" y="570" fill="#cc2b35">XC</text>
      </g>

      {/* view triad */}
      <g transform="translate(-360 1410)">
        <g fill="#bfc1c3" fillOpacity=".6" stroke="#a3a5a7" strokeWidth="3">
          <path d="M155 76L226 62 252 98 180 110z" /><path d="M155 76L180 110V170H155z" /><path d="M180 110L252 98V170H180z" />
          <path d="M226 62V128L252 158M226 128L155 140" fill="none" />
        </g>
        <path d="M178 160V90h8v70z" fill="#0b2bc4" /><path d="M182 66L191 94h-18z" fill="#0b2bc4" />
        <path d="M136 116L176 160H164z" fill="#1f9a3b" stroke="#157a2b" strokeWidth="5" /><path d="M136 116l20 6-12 10z" fill="#1f9a3b" />
        <path d="M266 152l32 2v6z" fill="#d33" stroke="#d33" strokeWidth="3" />
        <g fontSize="34" fontFamily="Noto Sans, sans-serif">
          <text x="173" y="62" fill="#3148dc">Z</text>
          <text x="122" y="119" fill="#2f9a48">Y</text>
          <text x="303" y="164" fill="#cc2b35">X</text>
        </g>
      </g>
    </svg>
  )
}

export default function App() {
  const [tab, setTab] = useState('motion')

  return (
    <div className="flex h-screen flex-col overflow-hidden bg-white pl-0.5 font-['Noto_Sans','Noto_Sans_CJK_SC',sans-serif]">
      <div className="flex h-[5px] shrink-0 bg-[#c9d9d8]">
        <div className="w-[81px] bg-[#588680]" />
        <div className="w-[50px] bg-white" />
        <div className="ml-auto mr-[89px] h-px w-[125px] bg-[#a9afae]" />
      </div>
      <Ribbon />
      <Toolbar />
      <div className="flex min-h-0 flex-1">
        <nav className="w-8 shrink-0 border-r border-[#b5b5b5] bg-[#dadada]">
          {sideTabs.map(({ id, label, h, icon }) => (
            <button
              key={id}
              type="button"
              aria-label={label}
              onClick={() => setTab(id)}
              className={clsx('flex items-center justify-center', h, tab === id ? 'ml-0.5 w-[30px] border-y border-l border-[#b5b5b5] bg-white' : 'w-full pl-1')}
            >
              {icon}
            </button>
          ))}
        </nav>
        <Navigator />
        <main className="min-w-0 flex-1 border-l border-t border-[#e8963c] bg-linear-to-b from-[#b4b5b7] to-[#e6e8e9] to-82%">
          <Model />
        </main>
      </div>
    </div>
  )
}
